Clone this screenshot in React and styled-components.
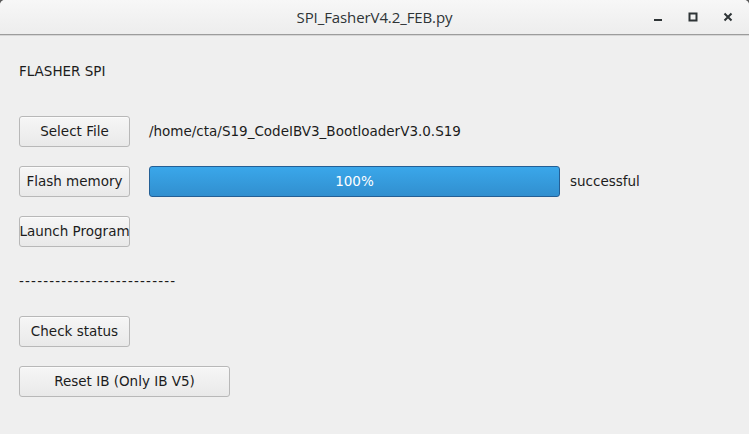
import React from "react";
import styled, { createGlobalStyle } from "styled-components";

const Global = createGlobalStyle`
  html, body { margin: 0; padding: 0; background: #5a5a5a; }
  body { width: 749px; height: 434px; overflow: hidden; }
  * { box-sizing: border-box; }
`;

const Window = styled.div`
  width: 749px;
  height: 434px;
  display: flex;
  flex-direction: column;
  background: #efefef;
  border-radius: 5px 5px 0 0;
  overflow: hidden;
  font-family: "DejaVu Sans", sans-serif;
  font-size: 13.5px;
  color: #1c1c1c;
`;

const TitleBar = styled.div`
  height: 35px;
  flex: none;
  display: grid;
  grid-template-columns: 1fr auto 1fr;
  align-items: center;
  background: linear-gradient(#f7f7f7, #ededed);
  border-bottom: 1px solid #9c9c9c;
  box-shadow: 0 1px 0 #d6d6d6;
`;

const Title = styled.div`
  grid-column: 2;
  font-family: "Open Sans", sans-serif;
  font-size: 15px;
  color: #2e3436;
  letter-spacing: -0.1px;
  padding-bottom: 1px;
`;

const Controls = styled.div`
  grid-column: 3;
  justify-self: end;
  display: flex;
  align-items: center;
  padding-right: 4px;
`;

const CtrlBtn = styled.div`
  width: 35px;
  height: 34px;
  display: flex;
  align-items: center;
  justify-content: center;
`;

const Body = styled.div`
  flex: 1;
  display: flex;
  flex-direction: column;
  padding: 28px 0 0 19px;
`;

const Heading = styled.div`
  height: 16px;
  line-height: 16px;
  margin-bottom: 27px;
`;

const Row = styled.div`
  height: 50px;
  display: flex;
  align-items: center;
  gap: 19px;
`;

const Button = styled.div`
  width: ${(p) => p.$w || 111}px;
  height: 31px;
  display: flex;
  align-items: center;
  justify-content: center;
  border: 1px solid #b8b8b8;
  border-radius: 3px;
  background: linear-gradient(#f6f6f6, #e9e9e9);
  box-shadow: inset 0 1px 0 #fbfbfb;
  color: #1c1c1c;
  white-space: nowrap;
  flex: none;
`;

const PathText = styled.div``;

const Progress = styled.div`
  width: 411px;
  height: 31px;
  display: flex;
  align-items: center;
  justify-content: center;
  border: 1px solid #245f95;
  border-radius: 3px;
  background: linear-gradient(#3aa7ea, #318fcf);
  color: #ffffff;
  margin-right: -9px;
`;

const Status = styled.div``;

const Dashes = styled.div`
  letter-spacing: 1.18px;
`;

export default function App() {
  return (
    <>
      <Global />
      <Window>
        <TitleBar>
          <Title>SPI_FasherV4.2_FEB.py</Title>
          <Controls>
            <CtrlBtn>
              <svg width="10" height="10" viewBox="0 0 10 10">
                <rect x="1" y="7" width="8" height="2" fill="#2e3436" />
              </svg>
            </CtrlBtn>
            <CtrlBtn>
              <svg width="10" height="10" viewBox="0 0 10 10">
                <rect x="1.5" y="1.5" width="7" height="7" fill="none" stroke="#2e3436" strokeWidth="2" />
              </svg>
            </CtrlBtn>
            <CtrlBtn>
              <svg width="10" height="10" viewBox="0 0 10 10">
                <path d="M1.5 1.5 L8.5 8.5 M8.5 1.5 L1.5 8.5" stroke="#2e3436" strokeWidth="2" />
              </svg>
            </CtrlBtn>
          </Controls>
        </TitleBar>
        <Body>
          <Heading>FLASHER SPI</Heading>
          <Row>
            <Button>Select File</Button>
            <PathText>/home/cta/S19_CodeIBV3_BootloaderV3.0.S19</PathText>
          </Row>
          <Row>
            <Button>Flash memory</Button>
            <Progress>100%</Progress>
            <Status>successful</Status>
          </Row>
          <Row>
            <Button>Launch Program</Button>
          </Row>
          <Row>
            <Dashes>--------------------------</Dashes>
          </Row>
          <Row>
            <Button>Check status</Button>
          </Row>
          <Row>
            <Button $w={211}>Reset IB (Only IB V5)</Button>
          </Row>
        </Body>
      </Window>
    </>
  );
}
